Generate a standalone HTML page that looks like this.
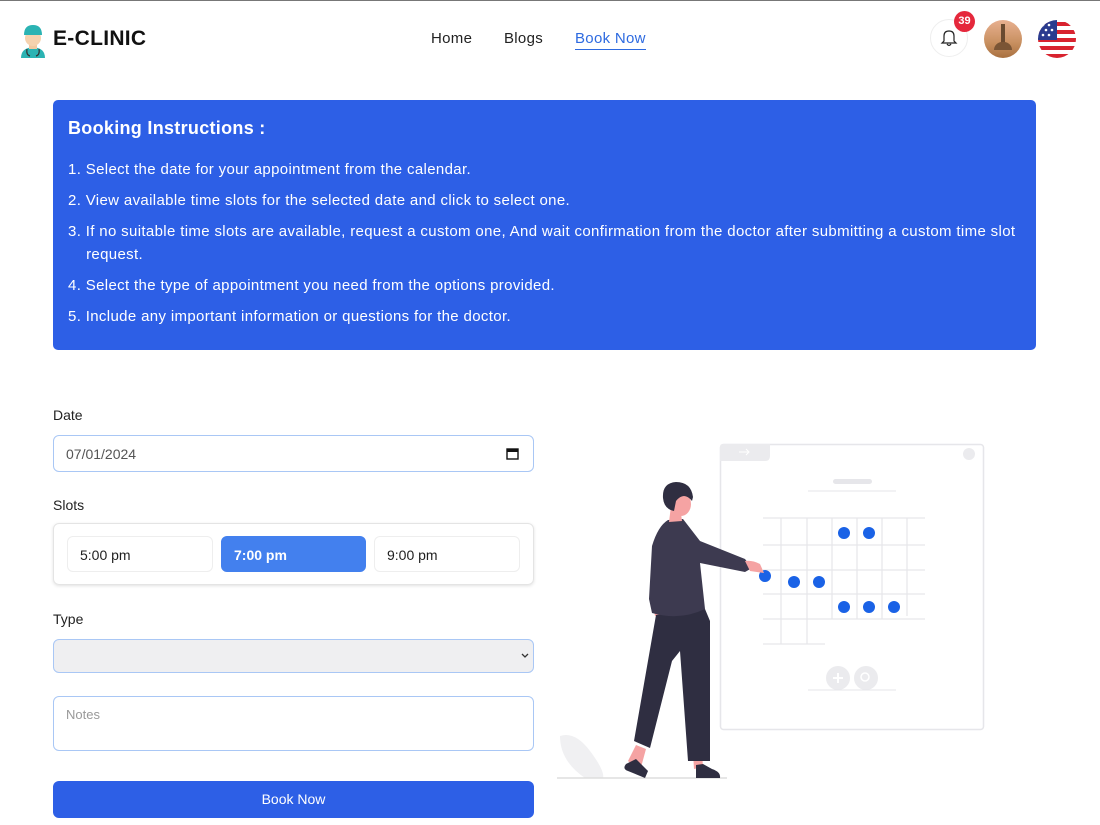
<!DOCTYPE html>
<html><head><meta charset="utf-8"><style>
*{box-sizing:border-box;margin:0;padding:0}
body{width:1100px;height:825px;overflow:hidden;background:#fff;font-family:"Liberation Sans","DejaVu Sans",sans-serif;color:#1f1f1f;border-top:1px solid #777;position:relative}
.abs{position:absolute}
.logo{left:53px;top:26px;font-size:21px;font-weight:bold;color:#111;letter-spacing:.3px}
.nav{top:29px;font-size:15px;color:#222;letter-spacing:.3px}
.box{left:53px;top:99px;width:983px;height:250px;background:#2d5fe6;border-radius:5px;color:#fff;padding:18px 15px;overflow:hidden}
.box h2{font-size:18px;font-weight:bold;margin-bottom:19px;letter-spacing:.3px}
.box p{font-size:15px;line-height:23px;margin-bottom:8px;letter-spacing:.35px;white-space:nowrap}
.lbl{left:53px;font-size:14px;color:#222}
.inp{left:53px;width:481px;border:1px solid #a9c7f5;border-radius:6px;background:#fff}
.slot{position:absolute;top:12px;height:36px;border:1px solid #eee;border-radius:6px;font-size:14px;padding:10px 12px;background:#fff}
</style></head><body>
<svg class="abs" style="left:18px;top:22px" width="30" height="36" viewBox="0 0 30 36">
<path d="M3 35 Q3 25 15 24 Q27 25 27 35Z" fill="#2bb3b3"/>
<rect x="11" y="20" width="8" height="6" fill="#f2c9a0"/>
<ellipse cx="15" cy="15" rx="8" ry="8" fill="#f6d2ae"/>
<path d="M6 12 Q6 2 15 2 Q24 2 24 12Z" fill="#2bb3b3"/>
<path d="M9 26 Q8 32 12 33 M21 26 Q22 32 18 33" stroke="#333" fill="none" stroke-width="1.2"/>
</svg>
<div class="abs logo">E-CLINIC</div>
<div class="abs nav" style="left:431px">Home</div>
<div class="abs nav" style="left:504px">Blogs</div>
<div class="abs nav" style="left:575px;color:#2d6ae0;border-bottom:1.5px solid #2d6ae0;padding-bottom:2px">Book Now</div>
<div class="abs" style="left:930px;top:18px;width:38px;height:38px;border:1px solid #eee;border-radius:50%"></div>
<svg class="abs" style="left:940px;top:27px" width="18" height="20" viewBox="0 0 18 20"><path d="M4 13 V8 Q4 3 9 3 Q14 3 14 8 V13 L16 15 H2 Z M7 16 Q9 19 11 16" fill="none" stroke="#222" stroke-width="1.2"/></svg>
<div class="abs" style="left:954px;top:10px;width:21px;height:21px;border-radius:50%;background:#e5283c;color:#fff;font-size:11px;font-weight:bold;text-align:center;line-height:21px">39</div>
<div class="abs" style="left:984px;top:19px;width:38px;height:38px;border-radius:50%;background:linear-gradient(#e8b090,#c89060 60%,#a87040);overflow:hidden"><div style="position:absolute;left:17px;top:4px;width:4px;height:26px;background:#6a4a30"></div><div style="position:absolute;left:10px;top:22px;width:18px;height:8px;background:#7a5535;border-radius:8px 8px 0 0"></div></div>
<svg class="abs" style="left:1038px;top:19px" width="38" height="38" viewBox="0 0 38 38"><defs><clipPath id="c"><circle cx="19" cy="19" r="19"/></clipPath></defs><g clip-path="url(#c)"><rect width="38" height="38" fill="#fff"/><rect y="2" width="38" height="4" fill="#d8232f"/><rect y="10" width="38" height="4" fill="#d8232f"/><rect y="18" width="38" height="4" fill="#d8232f"/><rect y="26" width="38" height="4" fill="#d8232f"/><rect y="34" width="38" height="4" fill="#d8232f"/><rect width="19" height="20" fill="#2a3b8f"/><g fill="#fff"><circle cx="5" cy="5" r="1.3"/><circle cx="11" cy="5" r="1.3"/><circle cx="8" cy="10" r="1.3"/><circle cx="14" cy="10" r="1.3"/><circle cx="5" cy="15" r="1.3"/><circle cx="11" cy="15" r="1.3"/></g></g></svg>

<div class="abs box">
<h2>Booking Instructions :</h2>
<p>1. Select the date for your appointment from the calendar.</p>
<p>2. View available time slots for the selected date and click to select one.</p>
<p>3. If no suitable time slots are available, request a custom one, And wait confirmation from the doctor after submitting a custom time slot<br>&nbsp;&nbsp;&nbsp;&nbsp;request.</p>
<p>4. Select the type of appointment you need from the options provided.</p>
<p>5. Include any important information or questions for the doctor.</p>
</div>

<div class="abs lbl" style="top:406px">Date</div>
<div class="abs inp" style="top:434px;height:37px;font-size:14px;color:#555;padding:10px 12px">07/01/2024
<svg style="position:absolute;right:14px;top:11px" width="13" height="13" viewBox="0 0 13 13"><rect x="1" y="2" width="11" height="10" fill="none" stroke="#111" stroke-width="1.4"/><rect x="1" y="2" width="11" height="3" fill="#111"/></svg></div>
<div class="abs lbl" style="top:496px">Slots</div>
<div class="abs" style="left:53px;top:522px;width:481px;height:62px;border:1px solid #e4e4e4;border-radius:6px;box-shadow:0 1px 3px rgba(0,0,0,.12)">
<div class="slot" style="left:13px;width:146px">5:00 pm</div>
<div class="slot" style="left:167px;width:145px;background:#4380ee;border-color:#4380ee;color:#fff;font-weight:bold">7:00 pm</div>
<div class="slot" style="left:320px;width:146px">9:00 pm</div>
</div>
<div class="abs lbl" style="top:610px">Type</div>
<div class="abs inp" style="top:638px;height:34px;background:#efeff1"><svg style="position:absolute;right:4px;top:13px" width="8" height="6"><path d="M1 1 L4 4 L7 1" fill="none" stroke="#333" stroke-width="1.3"/></svg></div>
<div class="abs inp" style="top:695px;height:55px;font-size:13px;color:#999;padding:10px 12px">Notes</div>
<div class="abs" style="left:53px;top:780px;width:481px;height:37px;background:#2d5fe6;border-radius:6px;color:#fff;font-size:14px;text-align:center;line-height:37px">Book Now</div>

<svg class="abs" style="left:550px;top:430px" width="450" height="360" viewBox="550 430 450 360">
<rect x="720.5" y="443.5" width="263" height="285" rx="3" fill="#fff" stroke="#e6e6ea" stroke-width="1.5"/>
<path d="M720 446 Q720 443 723 443 H770 V455 Q770 460 765 460 H720Z" fill="#ebebee"/>
<path d="M739 451 H749 M746 448 L749 451 L746 454" stroke="#fff" fill="none"/>
<circle cx="969" cy="453" r="6" fill="#ebebee"/>
<rect x="833" y="478" width="39" height="5" rx="2.5" fill="#e6e6ea"/>
<line x1="808" y1="490" x2="896" y2="490" stroke="#e6e6ea"/>
<g stroke="#e6e6ea" stroke-width="1.2">
<line x1="763" y1="517" x2="925" y2="517"/><line x1="763" y1="544" x2="925" y2="544"/><line x1="763" y1="569" x2="925" y2="569"/><line x1="763" y1="593" x2="925" y2="593"/><line x1="763" y1="618" x2="925" y2="618"/><line x1="763" y1="643" x2="825" y2="643"/>
<line x1="781" y1="517" x2="781" y2="643"/><line x1="807" y1="517" x2="807" y2="643"/><line x1="832" y1="517" x2="832" y2="618"/><line x1="857" y1="517" x2="857" y2="618"/><line x1="882" y1="517" x2="882" y2="618"/><line x1="907" y1="517" x2="907" y2="615"/>
</g>
<g fill="#1a62e6"><circle cx="844" cy="532" r="6"/><circle cx="869" cy="532" r="6"/><circle cx="765" cy="575" r="6"/><circle cx="794" cy="581" r="6"/><circle cx="819" cy="581" r="6"/><circle cx="844" cy="606" r="6"/><circle cx="869" cy="606" r="6"/><circle cx="894" cy="606" r="6"/></g>
<circle cx="838" cy="677" r="12" fill="#ebebee"/><circle cx="866" cy="677" r="12" fill="#ebebee"/>
<path d="M833 677 H843 M838 672 V682" stroke="#fff" stroke-width="2"/><circle cx="865" cy="676" r="4" fill="none" stroke="#fff" stroke-width="1.5"/>
<line x1="808" y1="689" x2="896" y2="689" stroke="#e6e6ea"/>
<path d="M560 735 Q575 730 590 750 Q605 770 603 777 H585 Q560 760 560 735Z" fill="#f0f0f2"/>
<line x1="557" y1="777" x2="727" y2="777" stroke="#ddd" stroke-width="1.5"/>
<path d="M655 556 Q648 575 652 600 L655 615 L661 614 L660 575Z" fill="#f5a3a3"/>
<path d="M636 744 L628 760 L640 770 L646 748Z M693 752 L694 768 L703 766 L702 752Z" fill="#f5a3a3"/>
<path d="M626 763 Q622 768 628 770 L645 777 L648 770 L636 758Z" fill="#2f2e41"/>
<path d="M696 764 L696 777 L720 777 Q721 771 712 768 L703 763Z" fill="#2f2e41"/>
<path d="M656 614 L634 740 L650 747 L672 660 L680 650 L688 760 L710 760 L710 620 L705 608Z" fill="#2f2e41"/>
<path d="M668 519 L683 518 L700 540 L745 558 L752 567 L745 571 L700 562 L705 608 Q680 620 652 612 L649 598 L652 545 Q658 525 668 519Z" fill="#3d3a50"/>
<path d="M745 560 Q752 559 760 563 L764 572 L750 570Z" fill="#f5a3a3"/>
<path d="M671 505 L680 505 L682 520 L669 521Z" fill="#f5a3a3"/>
<ellipse cx="681" cy="503" rx="10" ry="12" fill="#f5a3a3"/>
<path d="M663 497 Q662 482 676 481 Q691 481 693 496 L692 500 Q684 490 676 500 L674 510 Q664 508 663 497Z" fill="#2f2e41"/>
</svg>
</body></html>
